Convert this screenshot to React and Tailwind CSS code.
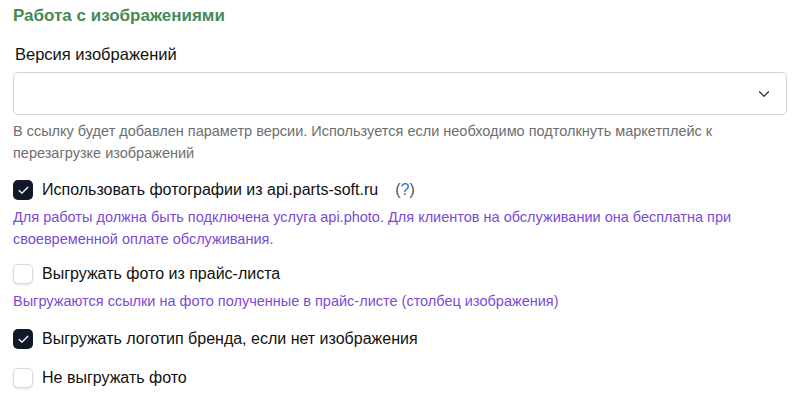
import { Check, ChevronDown } from "lucide-react";

const Checkbox = ({ checked }) => (
  <span
    className={
      checked
        ? "flex h-[20px] w-[20px] shrink-0 items-center justify-center rounded-[5px] bg-[#111827] text-white"
        : "h-[20px] w-[20px] shrink-0 rounded-[5px] border border-[#d9d9de] bg-white shadow-sm"
    }
  >
    {checked && <Check size={13} strokeWidth={2.25} />}
  </span>
);

const Option = ({ checked, label, className, children }) => (
  <label className={"flex h-[20px] items-center gap-[9px] " + (className || "")}>
    <Checkbox checked={checked} />
    <span className="text-[16px] leading-[20px] text-[#111111]">{label}</span>
    {children}
  </label>
);

const App = () => {
  return (
    <div className="min-h-[402px] bg-white px-[13px] pt-[4px] font-['Liberation_Sans',Arial,sans-serif]">
      <h2 className="text-[17px] font-bold leading-[24px] text-[#448a5a]">Работа с изображениями</h2>

      <div className="mt-[15px] pl-[2px] text-[16.5px] leading-[22px] text-[#111111]">Версия изображений</div>
      <div className="mt-[7px] flex h-[43px] items-center justify-end rounded-[5px] border border-[#d4d4d4] bg-white pr-[13px]">
        <ChevronDown size={18} strokeWidth={1.6} className="text-[#333333]" />
      </div>
      <p className="mt-[5px] text-[14.5px] leading-[22px] text-[#6e6e6e]">
        В ссылку будет добавлен параметр версии. Используется если необходимо подтолкнуть маркетплейс к
        <br />
        перезагрузке изображений
      </p>

      <Option checked label="Использовать фотографии из api.parts-soft.ru" className="mt-[16px]">
        <span className="ml-[8px] text-[16px] text-[#555555]">
          (<span className="text-[#2f6fe0]">?</span>)
        </span>
      </Option>
      <p className="mt-[6px] text-[14.5px] leading-[22px] text-[#7b4bd6]">
        Для работы должна быть подключена услуга api.photo. Для клиентов на обслуживании она бесплатна при
        <br />
        своевременной оплате обслуживания.
      </p>

      <Option label="Выгружать фото из прайс-листа" className="mt-[14px]" />
      <p className="mt-[6px] text-[14.5px] leading-[22px] text-[#7b4bd6]">
        Выгружаются ссылки на фото полученные в прайс-листе (столбец изображения)
      </p>

      <Option checked label="Выгружать логотип бренда, если нет изображения" className="mt-[17px]" />
      <Option label="Не выгружать фото" className="mt-[19px]" />
    </div>
  );
};

export default App;
